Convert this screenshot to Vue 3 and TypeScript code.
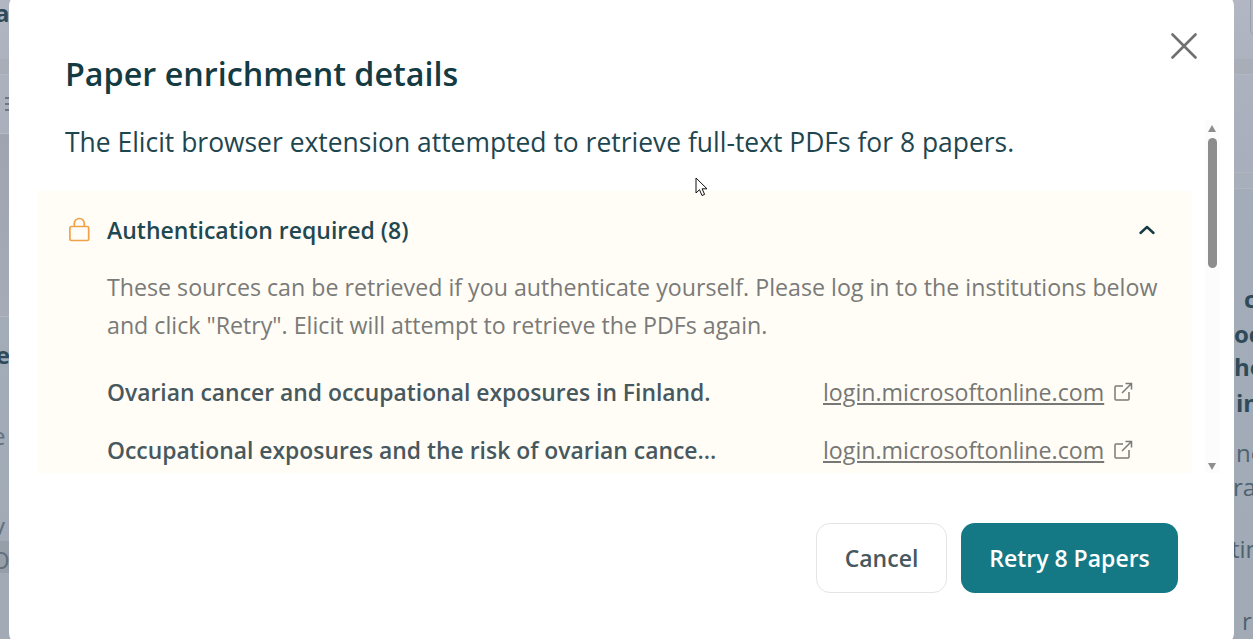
<script setup lang="ts">
interface Row { title: string; host: string }
const rows: Row[] = [
  { title: 'Ovarian cancer and occupational exposures in Finland.', host: 'login.microsoftonline.com' },
  { title: 'Occupational exposures and the risk of ovarian cance...', host: 'login.microsoftonline.com' },
]
</script>

<template>
  <div class="page">
    <div class="backdrop">
      <i class="band b-top"></i>
      <i class="band b-mid"></i>
      <i class="band b-left"></i>
      <i class="band b-row"></i>
      <i class="tr-box"></i>
      <svg class="menu" width="6" height="16" viewBox="0 0 6 16" stroke="#6f7682" stroke-width="2"><path d="M1 2h5M1 8h5M1 14h5"/></svg>
      <b class="bg a1">a</b>
      <b class="bg a3">he</b>
      <span class="bg a4">e</span>
      <span class="bg a5">v</span>
      <span class="bg a6">O</span>
      <b class="bg b1">c</b>
      <b class="bg b2">oc</b>
      <b class="bg b3">ho</b>
      <b class="bg b4">in</b>
      <span class="bg b5">ne</span>
      <span class="bg b6">ra</span>
      <span class="bg b7">tin</span>
      <span class="bg b8">ri</span>
    </div>
    <section class="dialog">
      <button class="close" aria-label="Close">
        <svg width="26" height="26" viewBox="0 0 26 26" fill="none" stroke="#707070" stroke-width="2.6" stroke-linecap="round"><path d="M1.500 1.500 24.500 24.500M24.500 1.500 1.500 24.500"/></svg>
      </button>
      <h2>Paper enrichment details</h2>
      <div class="scroll">
        <div class="body">
          <p class="lead">The Elicit browser extension attempted to retrieve full-text PDFs for 8 papers.</p>
          <div class="panel">
            <div class="head">
              <svg class="lock" width="24" height="26" viewBox="0 0 24 26" fill="none" stroke="#f0a24b" stroke-width="1.700"><rect x="2.900" y="9.500" width="18.800" height="14" rx="1.500"/><path d="M7.300 9.500V6.500a5 5 0 0 1 10 0V9.500"/></svg>
              <strong>Authentication required (8)</strong>
              <svg class="chev" width="18" height="12" viewBox="0 0 18 12" fill="none" stroke="#173b43" stroke-width="2.400" stroke-linecap="round" stroke-linejoin="round"><path d="M2.500 9 9 3l6.500 6"/></svg>
            </div>
            <p class="note">These sources can be retrieved if you authenticate yourself. Please log in to the institutions below and click "Retry". Elicit will attempt to retrieve the PDFs again.</p>
            <div v-for="r in rows" :key="r.title" class="row">
              <span class="title">{{ r.title }}</span>
              <span class="link"><a>{{ r.host }}</a>
                <svg width="20" height="20" viewBox="0 0 20 20" fill="none" stroke="#7a7a78" stroke-width="1.500"><path d="M10 4H3a1 1 0 0 0-1 1v12a1 1 0 0 0 1 1h12a1 1 0 0 0 1-1v-7M9 11 18.500 1.500M12.500 1.500h6v6"/></svg>
              </span>
            </div>
          </div>
        </div>
        <div class="bar">
          <i class="up"></i>
          <i class="thumb"></i>
          <i class="down"></i>
        </div>
      </div>
      <footer>
        <button class="cancel">Cancel</button>
        <button class="retry">Retry 8 Papers</button>
      </footer>
    </section>
    <svg class="cursor" width="14" height="20" viewBox="0 0 14 20"><path d="M1 1v15l3.500-3.300 2.500 5.800 2.600-1.100-2.500-5.600H12z" fill="#fff" stroke="#111" stroke-width="1"/></svg>
  </div>
</template>

<style>
html, body { margin: 0; overflow: hidden; }
</style>

<style scoped>
.page {
  position: relative;
  width: 1253px;
  height: 639px;
  overflow: hidden;
  font-family: "Open Sans", "Noto Sans", sans-serif;
  background: #a2abb6;
}
.backdrop { position: absolute; inset: 0; background: linear-gradient(180deg, #b2b7c3 0, #adb2bf 60px, #a8aebb 172px, #a3adb9 188px, #a1aab5 100%); }
.band { position: absolute; left: 0; right: 0; }
.b-top { top: 59px; height: 15px; background: #a8adb8; border-bottom: 1px solid #b3b7c2; }
.b-mid { top: 172px; height: 15px; left: 1234px; background: #a7afba; border-top: 1px solid #b0b6c0; border-bottom: 1px solid #afb6c0; }
.b-left { top: 133px; height: 182px; width: 9px; right: auto; background: linear-gradient(180deg, #9fa4b0, #a5abb7); border-top: 1px solid #b5bac4; border-bottom: 1px solid #b1b6c0; }
.b-row { top: 541px; height: 32px; background: #969ea8; right: auto; width: 12px; }
.tr-box { position: absolute; top: -6px; left: 1250px; width: 20px; height: 40px; border: 1px solid #99a0ad; border-radius: 6px; }
.menu { position: absolute; left: 4px; top: 96px; }
.bg { position: absolute; font-size: 24px; line-height: 28px; color: #566877; font-weight: 400; }
b.bg { font-weight: 700; color: #2f4a58; }
.a1 { top: -1px; left: -5px; color: #41647f; }
.a3 { top: 341px; left: -20px; }
.a4 { top: 422px; left: -8px; color: #626f7e; }
.a5 { top: 512px; left: -7px; color: #626f7e; }
.a6 { top: 546px; left: -9px; color: #626f7e; }
.b1 { top: 285px; left: 1244px; }
.b2 { top: 320px; left: 1234px; }
.b3 { top: 353px; left: 1234px; }
.b4 { top: 389px; left: 1236px; }
.b5 { top: 439px; left: 1236px; color: #4f6270; }
.b6 { top: 473px; left: 1233px; color: #4f6270; }
.b7 { top: 535px; left: 1231px; color: #4f6270; }
.b8 { top: 607px; left: 1242px; color: #4f6270; }
.dialog {
  position: absolute;
  left: 9px;
  top: -6px;
  width: 1225px;
  height: 651px;
  box-sizing: border-box;
  background: #fff;
  border-radius: 12px;
  padding: 57px 0 52px;
  display: flex;
  flex-direction: column;
}
.close {
  position: absolute;
  top: 39px;
  left: 1162px;
  padding: 0;
  border: 0;
  background: none;
  line-height: 0;
}
h2 {
  margin: 0 0 0 56px;
  font-size: 32.3px;
  line-height: 44px;
  font-weight: 600;
  color: #143a42;
}
.scroll {
  position: relative;
  margin-top: 25px;
  height: 353px;
  overflow: hidden;
  display: flex;
}
.body { width: 1183px; padding: 2px 0 0 29px; box-sizing: border-box; flex: none; }
.lead {
  margin: 0 0 28px 27px;
  font-size: 26.45px;
  line-height: 41px;
  white-space: nowrap;
  color: #1e464f;
}
.panel {
  background: #fffdf6;
  width: 1154px;
  height: 282px;
  overflow: hidden;
  padding: 0 30px;
  box-sizing: border-box;
}
.head { display: flex; align-items: center; height: 77px; }
.lock { margin: 0 16px 0 -1px; flex: none; }
.head strong { font-size: 23px; font-weight: 600; color: #1f4851; flex: 1; }
.chev { margin-right: 6px; }
.note { margin: 0 0 19px 39px; font-size: 23.2px; line-height: 38px; color: #7a7a78; }
.row { display: flex; align-items: center; height: 58px; margin-left: 39px; }
.title { font-size: 22.88px; font-weight: 600; color: #47585e; width: 716px; white-space: nowrap; overflow: hidden; }
.link { display: flex; align-items: center; gap: 9px; color: #777775; font-size: 23.200px; }
.link a { text-decoration: underline; }
.bar { position: relative; width: 15px; margin-left: 13px; background: #fcfcfc; flex: none; }
.thumb { position: absolute; left: 3px; top: 18px; width: 9px; height: 130px; border-radius: 5px; background: #8d8d8d; }
.up, .down { position: absolute; left: 3px; width: 0; height: 0; border-left: 4.500px solid transparent; border-right: 4.500px solid transparent; }
.up { top: 5px; border-bottom: 7px solid #8d8d8d; }
.down { bottom: 3px; border-top: 7px solid #8d8d8d; }
footer { display: flex; justify-content: flex-end; gap: 14px; margin-top: auto; padding-right: 56px; }
footer button { height: 70px; border-radius: 14px; font: 600 23px "Open Sans", sans-serif; }
.cancel { width: 131px; background: #fff; color: #47585e; border: 1.500px solid #e4e4e2; }
.retry { width: 217px; background: #157985; color: #fff; border: 0; }
.cursor { position: absolute; left: 695px; top: 177px; }
</style>
